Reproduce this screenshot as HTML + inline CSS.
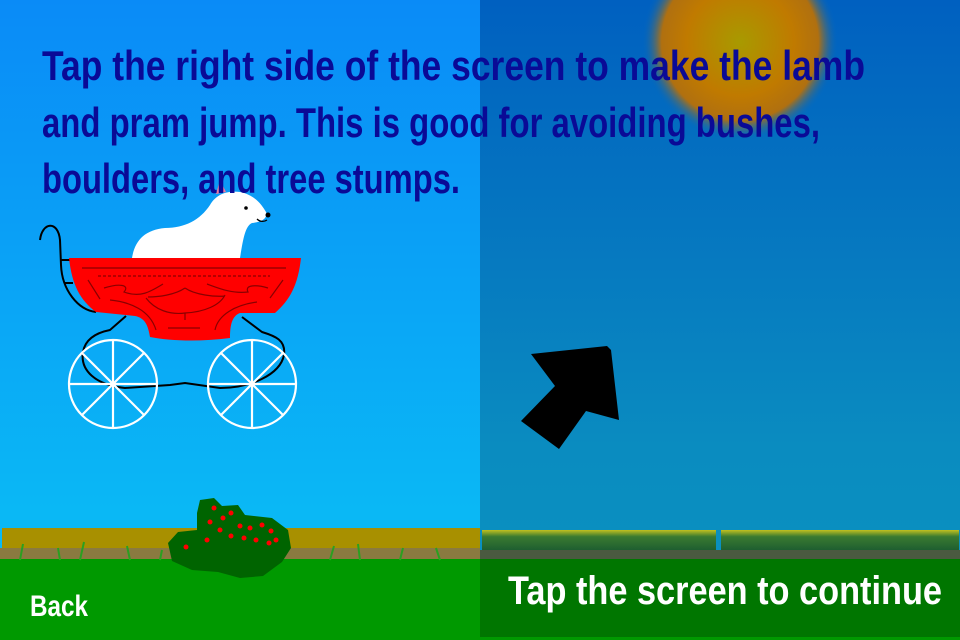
<!DOCTYPE html>
<html><head><meta charset="utf-8"><style>
html,body{margin:0;padding:0;width:960px;height:640px;overflow:hidden;background:#0a9ef5}
svg{display:block}
</style></head><body>
<svg width="960" height="640" viewBox="0 0 960 640" xmlns="http://www.w3.org/2000/svg">
<defs>
<linearGradient id="sky" x1="0" y1="0" x2="0" y2="1">
<stop offset="0" stop-color="#0a8bf7"/><stop offset="0.8" stop-color="#0ab8f5"/><stop offset="1" stop-color="#0abcf5"/>
</linearGradient>
<radialGradient id="sun" cx="0.5" cy="0.5" r="0.5">
<stop offset="0" stop-color="#a89a00"/><stop offset="0.55" stop-color="#c07a00"/><stop offset="0.8" stop-color="#b07010"/><stop offset="1" stop-color="#0068c0" stop-opacity="0"/>
</radialGradient>
<linearGradient id="ov" x1="0" y1="0" x2="0" y2="1">
<stop offset="0" stop-color="#0060c0"/><stop offset="0.8" stop-color="#0a8cc0"/><stop offset="1" stop-color="#0a90c0"/>
</linearGradient>
<linearGradient id="hedge" x1="0" y1="0" x2="0" y2="1">
<stop offset="0" stop-color="#c0c020"/><stop offset="0.3" stop-color="#3a7a30"/><stop offset="1" stop-color="#1a5a30"/>
</linearGradient>
</defs>
<rect width="960" height="640" fill="url(#sky)"/>
<rect x="2" y="528" width="478" height="24" fill="#a89000"/>
<rect x="0" y="548" width="480" height="12" fill="#8a7a40"/>
<rect x="480" y="0" width="480" height="560" fill="url(#ov)"/>
<circle cx="740" cy="42" r="98" fill="url(#sun)"/>
<rect x="482" y="530" width="234" height="22" fill="url(#hedge)"/>
<rect x="721" y="530" width="238" height="22" fill="url(#hedge)"/>
<rect x="480" y="550" width="480" height="10" fill="#4a5a40"/>
<rect x="0" y="559" width="960" height="81" fill="#009900"/>
<rect x="480" y="559" width="480" height="78" fill="#007600"/>
<g stroke="#2aa020" stroke-width="2">
<path d="M20 560 l3 -16 M60 560 l-2 -12 M80 560 l4 -18 M130 560 l-3 -14 M160 560 l2 -10 M198 560 l2 -14 M330 560 l4 -14 M360 560 l-2 -16 M400 560 l3 -12 M440 560 l-4 -12"/>
</g>
<path d="M197 513 L200 500 L214 498 L222 506 L238 505 L245 515 L272 518 L288 530 L291 548 L282 562 L263 576 L240 578 L218 572 L192 570 L172 561 L168 543 L178 532 L197 530 Z" fill="#006400"/>
<g fill="#f00">
<circle cx="214" cy="508" r="2.5"/><circle cx="231" cy="513" r="2.5"/><circle cx="210" cy="522" r="2.5"/><circle cx="223" cy="518" r="2.5"/><circle cx="240" cy="526" r="2.5"/><circle cx="250" cy="528" r="2.5"/><circle cx="262" cy="525" r="2.5"/><circle cx="220" cy="530" r="2.5"/><circle cx="231" cy="536" r="2.5"/><circle cx="244" cy="538" r="2.5"/><circle cx="271" cy="531" r="2.5"/><circle cx="276" cy="540" r="2.5"/><circle cx="269" cy="543" r="2.5"/><circle cx="207" cy="540" r="2.5"/><circle cx="186" cy="547" r="2.5"/><circle cx="256" cy="540" r="2.5"/>
</g>
<path d="M132 258 C135 240 145 230 165 228 C185 228 200 220 210 205 C215 196 225 190 240 192 C255 195 262 205 266 212 C268 218 262 222 252 223 C245 226 243 240 240 258 Z" fill="#fff"/>
<path d="M216 194 L220 180 L226 192 Z" fill="#f07aa0"/>
<circle cx="246" cy="208" r="1.8" fill="#000"/>
<circle cx="268" cy="215" r="2.5" fill="#000"/>
<path d="M257 219 C260 222 264 222 267 220" stroke="#000" stroke-width="1.3" fill="none"/>
<g stroke="#000" stroke-width="2" fill="none">
<path d="M40 240 C42 222 58 220 60 240 L61 265 C62 290 78 310 96 312"/>
<path d="M61 260 L70 260 M64 283 L73 283"/>
<path d="M126 316 L110 330 C95 333 85 340 83 352 C80 370 95 385 125 388 L170 385 L185 383 L220 388 C250 388 280 375 284 355 C286 340 275 336 262 332 L242 317"/>
</g>
<path d="M69 258 L301 258 C298 285 290 300 275 313 L240 313 C232 316 230 325 230 338 C200 342 170 341 150 337 C148 325 145 318 135 316 L96 312 C80 300 72 285 69 258 Z" fill="#f00"/>
<g stroke="#8a0000" stroke-width="1.2" fill="none">
<path d="M82 268 L286 268"/>
<path d="M98 276 L270 276" stroke-dasharray="3 2"/>
<path d="M88 280 L100 299 M283 280 L270 298"/>
<path d="M104 288 C120 283 130 285 124 292 C140 298 150 292 163 284 M207 284 C218 288 232 294 248 292 C244 284 258 285 268 288"/>
<path d="M146 298 C155 310 170 315 185 313 C205 312 220 305 225 295 M185 288 C175 295 158 297 148 297 M185 288 C195 295 215 297 225 296"/>
<path d="M110 300 C130 302 150 310 156 330 M257 302 C235 305 218 315 215 330 M168 328 L200 328 M185 313 L185 320"/>
</g>
<g stroke="#fff" stroke-width="2.2" fill="none">
<circle cx="113" cy="384" r="44"/>
<path d="M69 384 H157 M113 340 V428 M82 353 L144 415 M144 353 L82 415"/>
<circle cx="252" cy="384" r="44"/>
<path d="M208 384 H296 M252 340 V428 M221 353 L283 415 M283 353 L221 415"/>
</g>
<path d="M531 354 L607 346 L611 350 L619 420 L586 411 L559 449 L521 421 L555 386 Z" fill="#000"/>
<g font-family="'Liberation Sans Narrow','Liberation Sans',sans-serif" font-size="42" font-weight="bold" fill="#0a0a96">
<text x="42" y="80" textLength="823" lengthAdjust="spacingAndGlyphs">Tap the right side of the screen to make the lamb</text>
<text x="42" y="137" textLength="778" lengthAdjust="spacingAndGlyphs">and pram jump. This is good for avoiding bushes,</text>
<text x="42" y="193" textLength="418" lengthAdjust="spacingAndGlyphs">boulders, and tree stumps.</text>
</g>
<g font-family="'Liberation Sans Narrow','Liberation Sans',sans-serif" font-weight="bold" fill="#fff">
<text x="30" y="616" font-size="30" textLength="58" lengthAdjust="spacingAndGlyphs">Back</text>
<text x="508" y="604" font-size="40" textLength="434" lengthAdjust="spacingAndGlyphs">Tap the screen to continue</text>
</g>
</svg>
</body></html>
